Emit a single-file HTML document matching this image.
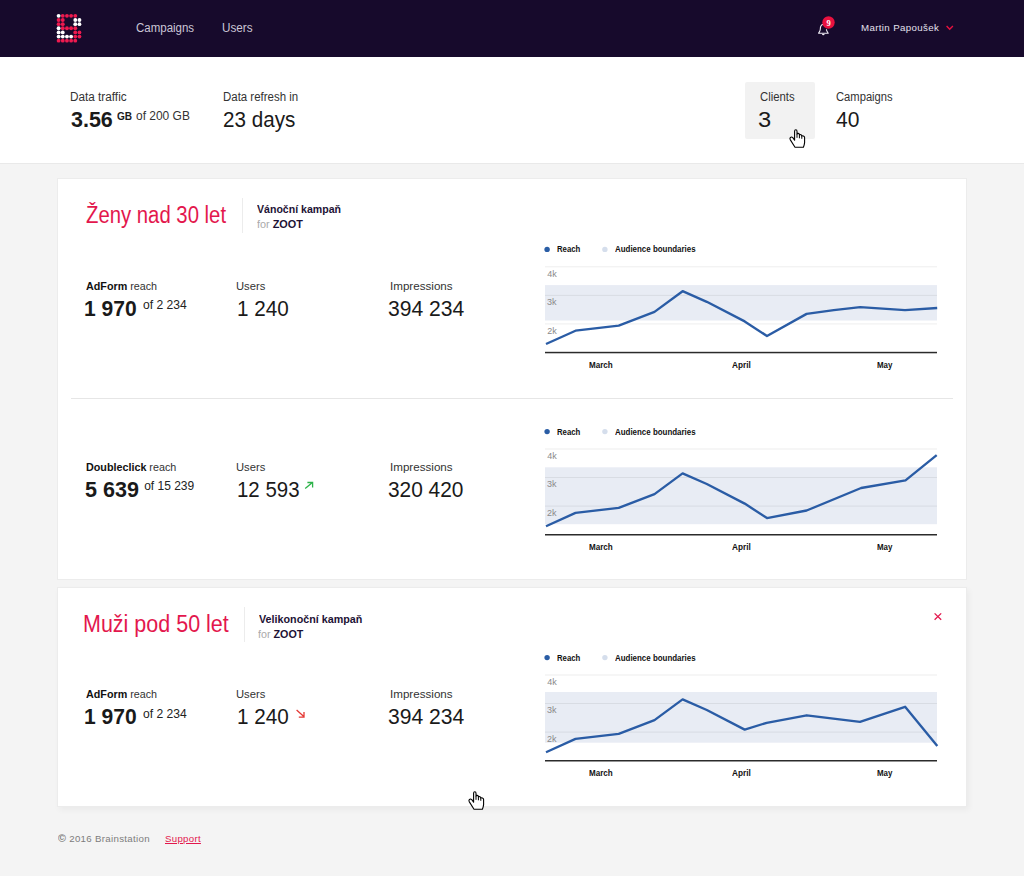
<!DOCTYPE html>
<html><head><meta charset="utf-8"><title>Brainstation</title>
<style>
html,body{margin:0;padding:0;}
body{width:1024px;height:876px;position:relative;overflow:hidden;background:#f4f4f4;font-family:"Liberation Sans",sans-serif;}
.t{position:absolute;white-space:nowrap;line-height:1;}
.b{display:inline-block;width:0;height:0;vertical-align:baseline;}
</style></head><body>
<div style="position:absolute;left:0;top:0;width:1024px;height:57px;background:#170a2c"></div>
<svg style="position:absolute;left:0;top:0" width="100" height="57"><circle cx="58.60" cy="15.85" r="1.92" fill="#ffffff"/><circle cx="62.77" cy="15.85" r="1.92" fill="#ee1a4f"/><circle cx="66.94" cy="15.85" r="1.92" fill="#ee1a4f"/><circle cx="71.11" cy="15.85" r="1.92" fill="#ee1a4f"/><circle cx="75.28" cy="15.85" r="1.92" fill="#ee1a4f"/><circle cx="58.60" cy="19.99" r="1.92" fill="#ee1a4f"/><circle cx="62.77" cy="19.99" r="1.92" fill="#ee1a4f"/><circle cx="75.28" cy="19.99" r="1.92" fill="#ffffff"/><circle cx="79.45" cy="19.99" r="1.92" fill="#ffffff"/><circle cx="58.60" cy="24.13" r="1.92" fill="#ee1a4f"/><circle cx="62.77" cy="24.13" r="1.92" fill="#ee1a4f"/><circle cx="75.28" cy="24.13" r="1.92" fill="#ffffff"/><circle cx="79.45" cy="24.13" r="1.92" fill="#ffffff"/><circle cx="58.60" cy="28.27" r="1.92" fill="#ffffff"/><circle cx="62.77" cy="28.27" r="1.92" fill="#ee1a4f"/><circle cx="66.94" cy="28.27" r="1.92" fill="#ee1a4f"/><circle cx="71.11" cy="28.27" r="1.92" fill="#ee1a4f"/><circle cx="75.28" cy="28.27" r="1.92" fill="#ee1a4f"/><circle cx="58.60" cy="32.41" r="1.92" fill="#ffffff"/><circle cx="62.77" cy="32.41" r="1.92" fill="#ffffff"/><circle cx="75.28" cy="32.41" r="1.92" fill="#ee1a4f"/><circle cx="79.45" cy="32.41" r="1.92" fill="#ee1a4f"/><circle cx="58.60" cy="36.55" r="1.92" fill="#ffffff"/><circle cx="62.77" cy="36.55" r="1.92" fill="#ffffff"/><circle cx="66.94" cy="36.55" r="1.92" fill="#ffffff"/><circle cx="71.11" cy="36.55" r="1.92" fill="#ffffff"/><circle cx="75.28" cy="36.55" r="1.92" fill="#ee1a4f"/><circle cx="79.45" cy="36.55" r="1.92" fill="#ee1a4f"/><circle cx="58.60" cy="40.69" r="1.92" fill="#ee1a4f"/><circle cx="62.77" cy="40.69" r="1.92" fill="#ee1a4f"/><circle cx="66.94" cy="40.69" r="1.92" fill="#ee1a4f"/><circle cx="71.11" cy="40.69" r="1.92" fill="#ee1a4f"/><circle cx="75.28" cy="40.69" r="1.92" fill="#ee1a4f"/></svg>
<div id="nav_campaigns" class="t" style="left:135.91px;top:21.50px;font-size:12px;color:#cbc6d6;font-weight:normal;transform:scaleX(0.9571);transform-origin:0 0;">Campaigns<i class="b"></i></div>
<div id="nav_users" class="t" style="left:221.89px;top:21.50px;font-size:12px;color:#cbc6d6;font-weight:normal;transform:scaleX(0.9768);transform-origin:0 0;">Users<i class="b"></i></div>
<svg style="position:absolute;left:810px;top:10px" width="30" height="30" viewBox="810 10 30 30"><path d="M823.3 24.2 C820.6 24.6 820.3 27 820.3 29.2 C820.2 31 819.2 32.2 818.6 33.2 L828.2 33.2 C827.6 32.2 826.5 31 826.4 29.2" fill="none" stroke="#f1eef6" stroke-width="1.1" stroke-linejoin="round"/><path d="M822 34 a1.3 1.3 0 0 0 2.6 0 z" fill="#f1eef6"/><circle cx="828.5" cy="22.5" r="6.2" fill="#e8113f"/><text x="828.6" y="26.2" font-family="Liberation Serif" font-weight="bold" font-size="8.5" fill="#fff" text-anchor="middle">9</text></svg>
<div id="user_name" class="t" style="left:860.99px;top:22.91px;font-size:9.5px;color:#e4e0ec;font-weight:normal;transform:scaleX(1.0213);transform-origin:0 0;letter-spacing:0.35px;">Martin Papoušek<i class="b"></i></div>
<svg style="position:absolute;left:940px;top:20px" width="20" height="15" viewBox="940 20 20 15"><path d="M946.6 26.1 L949.7 29.3 L952.9 26.1" fill="none" stroke="#e8113f" stroke-width="1.4"/></svg>
<div style="position:absolute;left:0;top:57px;width:1024px;height:106px;background:#fff;border-bottom:1px solid #e9e9e9"></div>
<div id="dt_label" class="t" style="left:70.41px;top:90.81px;font-size:12px;color:#333333;font-weight:normal;transform:scaleX(0.9795);transform-origin:0 0;">Data traffic<i class="b"></i></div>
<div id="dt_val" class="t" style="left:71.37px;top:108.50px;font-size:22.5px;color:#1a1a1a;font-weight:bold;transform:scaleX(0.9546);transform-origin:0 0;">3.56<i class="b"></i></div>
<div id="dt_gb" class="t" style="left:116.90px;top:110.61px;font-size:11px;color:#1a1a1a;font-weight:bold;transform:scaleX(0.9166);transform-origin:0 0;">GB<i class="b"></i></div>
<div id="dt_of" class="t" style="left:136.32px;top:109.60px;font-size:12px;color:#333;font-weight:normal;transform:scaleX(0.9968);transform-origin:0 0;">of 200 GB<i class="b"></i></div>
<div id="dr_label" class="t" style="left:223.21px;top:90.81px;font-size:12px;color:#333333;font-weight:normal;transform:scaleX(0.9542);transform-origin:0 0;">Data refresh in<i class="b"></i></div>
<div id="dr_val" class="t" style="left:223.10px;top:109.00px;font-size:22.5px;color:#1a1a1a;font-weight:normal;transform:scaleX(0.9171);transform-origin:0 0;">23 days<i class="b"></i></div>
<div style="position:absolute;left:745px;top:82px;width:70px;height:57px;background:#f2f2f2;border-radius:2px"></div>
<div id="cl_label" class="t" style="left:760.31px;top:91.00px;font-size:12px;color:#333333;font-weight:normal;transform:scaleX(0.9444);transform-origin:0 0;">Clients<i class="b"></i></div>
<div id="cl_val" class="t" style="left:757.95px;top:108.81px;font-size:22.5px;color:#1a1a1a;font-weight:normal;transform:scaleX(1.0542);transform-origin:0 0;">3<i class="b"></i></div>
<div id="cp_label" class="t" style="left:835.83px;top:91.00px;font-size:12px;color:#333333;font-weight:normal;transform:scaleX(0.9334);transform-origin:0 0;">Campaigns<i class="b"></i></div>
<div id="cp_val" class="t" style="left:835.58px;top:108.81px;font-size:22.5px;color:#1a1a1a;font-weight:normal;transform:scaleX(0.9346);transform-origin:0 0;">40<i class="b"></i></div>
<div style="position:absolute;left:57px;top:178px;width:908px;height:400px;background:#fff;border:1px solid #ececec"></div>
<div style="position:absolute;left:57px;top:587px;width:908px;height:218px;background:#fff;border:1px solid #ececec;box-shadow:2px 3px 6px rgba(0,0,0,0.045)"></div>
<div style="position:absolute;left:71px;top:398px;width:882px;height:1px;background:#e6e6e6"></div>
<div id="c1_title" class="t" style="left:85.91px;top:204.11px;font-size:23px;color:#e3174d;font-weight:normal;transform:scaleX(0.8833);transform-origin:0 0;">Ženy nad 30 let<i class="b"></i></div>
<div style="position:absolute;left:242px;top:198px;width:1px;height:35px;background:#ececec"></div>
<div id="c1_suba" class="t" style="left:257.09px;top:203.61px;font-size:11px;color:#1d1235;font-weight:bold;transform:scaleX(0.9612);transform-origin:0 0;">Vánoční kampaň<i class="b"></i></div>
<div id="c1_subb" class="t" style="left:257.08px;top:218.81px;font-size:11px;color:#1d1235;font-weight:bold;transform:scaleX(0.9880);transform-origin:0 0;"><span style="color:#aaa;font-weight:normal">for</span> ZOOT<i class="b"></i></div>
<div id="c2_title" class="t" style="left:83.46px;top:612.61px;font-size:23px;color:#e3174d;font-weight:normal;transform:scaleX(0.9344);transform-origin:0 0;">Muži pod 50 let<i class="b"></i></div>
<div style="position:absolute;left:244px;top:607px;width:1px;height:35px;background:#ececec"></div>
<div id="c2_suba" class="t" style="left:259.09px;top:613.61px;font-size:11px;color:#1d1235;font-weight:bold;transform:scaleX(0.9774);transform-origin:0 0;">Velikonoční kampaň<i class="b"></i></div>
<div id="c2_subb" class="t" style="left:258.14px;top:629.11px;font-size:11px;color:#1d1235;font-weight:bold;transform:scaleX(0.9744);transform-origin:0 0;"><span style="color:#aaa;font-weight:normal">for</span> ZOOT<i class="b"></i></div>
<svg style="position:absolute;left:0;top:0" width="1024" height="876"><rect x="545" y="285.10" width="392" height="35.40" fill="#e8ecf4"/><rect x="545" y="266.30" width="392" height="1" fill="#000" fill-opacity="0.07"/><rect x="545" y="294.85" width="392" height="1" fill="#000" fill-opacity="0.07"/><rect x="545" y="323.40" width="392" height="1" fill="#000" fill-opacity="0.07"/><rect x="545" y="351.80" width="392" height="1.5" fill="#2b2b2b"/><path d="M546.0 344.0 L575.5 330.7 L618.7 325.7 L654.5 311.9 L682.6 291.2 L706.8 301.8 L744.7 321.4 L767.0 336.0 L806.6 313.9 L833.8 310.1 L860.2 307.1 L905.0 310.1 L937.2 308.0" fill="none" stroke="#2a5ca5" stroke-width="2.35" stroke-linejoin="round"/><circle cx="547.1" cy="249.40" r="2.7" fill="#2a5da5"/><circle cx="604.9" cy="249.40" r="2.7" fill="#d5deec"/></svg>
<div id="ch1_lg1" class="t" style="left:556.63px;top:245.41px;font-size:9px;color:#111;font-weight:bold;transform:scaleX(0.8611);transform-origin:0 0;">Reach<i class="b"></i></div>
<div id="ch1_lg2" class="t" style="left:615.38px;top:245.41px;font-size:9px;color:#111;font-weight:bold;transform:scaleX(0.8812);transform-origin:0 0;">Audience boundaries<i class="b"></i></div>
<div id="ch1_y4k" class="t" style="left:547.30px;top:269.81px;font-size:9px;color:#8a8a8a;font-weight:normal;">4k<i class="b"></i></div>
<div id="ch1_y3k" class="t" style="left:546.97px;top:297.91px;font-size:9px;color:#8a8a8a;font-weight:normal;">3k<i class="b"></i></div>
<div id="ch1_y2k" class="t" style="left:547.30px;top:326.71px;font-size:9px;color:#8a8a8a;font-weight:normal;">2k<i class="b"></i></div>
<div id="ch1_mar" class="t" style="left:588.60px;top:360.91px;font-size:9px;color:#111;font-weight:bold;transform:scaleX(0.8948);transform-origin:0 0;">March<i class="b"></i></div>
<div id="ch1_apr" class="t" style="left:732.00px;top:360.91px;font-size:9px;color:#111;font-weight:bold;transform:scaleX(0.9131);transform-origin:0 0;">April<i class="b"></i></div>
<div id="ch1_may" class="t" style="left:877.00px;top:360.91px;font-size:9px;color:#111;font-weight:bold;transform:scaleX(0.8821);transform-origin:0 0;">May<i class="b"></i></div>
<svg style="position:absolute;left:0;top:0" width="1024" height="876"><rect x="545" y="467.30" width="392" height="56.90" fill="#e8ecf4"/><rect x="545" y="448.50" width="392" height="1" fill="#000" fill-opacity="0.07"/><rect x="545" y="477.05" width="392" height="1" fill="#000" fill-opacity="0.07"/><rect x="545" y="505.60" width="392" height="1" fill="#000" fill-opacity="0.07"/><rect x="545" y="534.00" width="392" height="1.5" fill="#2b2b2b"/><path d="M546.0 526.2 L575.5 512.9 L618.7 507.9 L654.5 494.1 L682.6 473.4 L706.8 484.0 L744.7 503.6 L767.0 518.1 L806.6 510.5 L861.1 488.0 L905.5 480.3 L936.7 455.2" fill="none" stroke="#2a5ca5" stroke-width="2.35" stroke-linejoin="round"/><circle cx="547.1" cy="431.60" r="2.7" fill="#2a5da5"/><circle cx="604.9" cy="431.60" r="2.7" fill="#d5deec"/></svg>
<div id="ch2_lg1" class="t" style="left:556.63px;top:427.60px;font-size:9px;color:#111;font-weight:bold;transform:scaleX(0.8611);transform-origin:0 0;">Reach<i class="b"></i></div>
<div id="ch2_lg2" class="t" style="left:615.38px;top:427.60px;font-size:9px;color:#111;font-weight:bold;transform:scaleX(0.8812);transform-origin:0 0;">Audience boundaries<i class="b"></i></div>
<div id="ch2_y4k" class="t" style="left:547.30px;top:452.00px;font-size:9px;color:#8a8a8a;font-weight:normal;">4k<i class="b"></i></div>
<div id="ch2_y3k" class="t" style="left:546.97px;top:480.10px;font-size:9px;color:#8a8a8a;font-weight:normal;">3k<i class="b"></i></div>
<div id="ch2_y2k" class="t" style="left:546.97px;top:508.90px;font-size:9px;color:#8a8a8a;font-weight:normal;">2k<i class="b"></i></div>
<div id="ch2_mar" class="t" style="left:588.60px;top:543.10px;font-size:9px;color:#111;font-weight:bold;transform:scaleX(0.8948);transform-origin:0 0;">March<i class="b"></i></div>
<div id="ch2_apr" class="t" style="left:732.00px;top:543.10px;font-size:9px;color:#111;font-weight:bold;transform:scaleX(0.9131);transform-origin:0 0;">April<i class="b"></i></div>
<div id="ch2_may" class="t" style="left:877.00px;top:543.10px;font-size:9px;color:#111;font-weight:bold;transform:scaleX(0.8821);transform-origin:0 0;">May<i class="b"></i></div>
<svg style="position:absolute;left:0;top:0" width="1024" height="876"><rect x="545" y="692.00" width="392" height="50.70" fill="#e8ecf4"/><rect x="545" y="674.50" width="392" height="1" fill="#000" fill-opacity="0.07"/><rect x="545" y="703.05" width="392" height="1" fill="#000" fill-opacity="0.07"/><rect x="545" y="731.60" width="392" height="1" fill="#000" fill-opacity="0.07"/><rect x="545" y="760.00" width="392" height="1.5" fill="#2b2b2b"/><path d="M546.0 752.2 L575.5 738.9 L618.7 733.9 L654.5 720.1 L682.6 699.4 L706.8 710.0 L744.7 729.6 L766.7 722.8 L806.7 715.3 L860.0 721.9 L905.1 706.8 L937.3 745.9" fill="none" stroke="#2a5ca5" stroke-width="2.35" stroke-linejoin="round"/><circle cx="547.1" cy="657.60" r="2.7" fill="#2a5da5"/><circle cx="604.9" cy="657.60" r="2.7" fill="#d5deec"/></svg>
<div id="ch3_lg1" class="t" style="left:556.63px;top:653.60px;font-size:9px;color:#111;font-weight:bold;transform:scaleX(0.8611);transform-origin:0 0;">Reach<i class="b"></i></div>
<div id="ch3_lg2" class="t" style="left:615.38px;top:653.60px;font-size:9px;color:#111;font-weight:bold;transform:scaleX(0.8812);transform-origin:0 0;">Audience boundaries<i class="b"></i></div>
<div id="ch3_y4k" class="t" style="left:547.30px;top:678.00px;font-size:9px;color:#8a8a8a;font-weight:normal;">4k<i class="b"></i></div>
<div id="ch3_y3k" class="t" style="left:546.97px;top:706.10px;font-size:9px;color:#8a8a8a;font-weight:normal;">3k<i class="b"></i></div>
<div id="ch3_y2k" class="t" style="left:546.97px;top:734.90px;font-size:9px;color:#8a8a8a;font-weight:normal;">2k<i class="b"></i></div>
<div id="ch3_mar" class="t" style="left:588.60px;top:769.10px;font-size:9px;color:#111;font-weight:bold;transform:scaleX(0.8948);transform-origin:0 0;">March<i class="b"></i></div>
<div id="ch3_apr" class="t" style="left:732.00px;top:769.10px;font-size:9px;color:#111;font-weight:bold;transform:scaleX(0.9131);transform-origin:0 0;">April<i class="b"></i></div>
<div id="ch3_may" class="t" style="left:877.00px;top:769.10px;font-size:9px;color:#111;font-weight:bold;transform:scaleX(0.8821);transform-origin:0 0;">May<i class="b"></i></div>
<div id="m1_rl" class="t" style="left:85.69px;top:280.81px;font-size:11.5px;color:#333333;font-weight:normal;transform:scaleX(0.9342);transform-origin:0 0;"><b style="color:#111">AdForm</b> reach<i class="b"></i></div>
<div id="m1_rv" class="t" style="left:84.31px;top:298.10px;font-size:22.5px;color:#1a1a1a;font-weight:bold;transform:scaleX(0.9352);transform-origin:0 0;">1 970<i class="b"></i></div>
<div id="m1_ro" class="t" style="left:142.89px;top:299.21px;font-size:12px;color:#222;font-weight:normal;transform:scaleX(1.0101);transform-origin:0 0;">of 2 234<i class="b"></i></div>
<div id="m1_ul" class="t" style="left:236.15px;top:280.81px;font-size:11.5px;color:#333333;font-weight:normal;transform:scaleX(0.9757);transform-origin:0 0;">Users<i class="b"></i></div>
<div id="m1_uv" class="t" style="left:237.11px;top:298.10px;font-size:22.5px;color:#1a1a1a;font-weight:normal;transform:scaleX(0.9193);transform-origin:0 0;">1 240<i class="b"></i></div>
<div id="m1_il" class="t" style="left:390.30px;top:280.81px;font-size:11.5px;color:#333333;font-weight:normal;transform:scaleX(1.0101);transform-origin:0 0;">Impressions<i class="b"></i></div>
<div id="m1_iv" class="t" style="left:388.13px;top:298.10px;font-size:22.5px;color:#1a1a1a;font-weight:normal;transform:scaleX(0.9389);transform-origin:0 0;">394 234<i class="b"></i></div>
<div id="m2_rl" class="t" style="left:85.77px;top:461.50px;font-size:11.5px;color:#333333;font-weight:normal;transform:scaleX(0.9353);transform-origin:0 0;"><b style="color:#111">Doubleclick</b> reach<i class="b"></i></div>
<div id="m2_rv" class="t" style="left:85.07px;top:478.81px;font-size:22.5px;color:#1a1a1a;font-weight:bold;transform:scaleX(0.9583);transform-origin:0 0;">5 639<i class="b"></i></div>
<div id="m2_ro" class="t" style="left:144.15px;top:479.50px;font-size:12px;color:#222;font-weight:normal;">of 15 239<i class="b"></i></div>
<div id="m2_ul" class="t" style="left:236.15px;top:461.50px;font-size:11.5px;color:#333333;font-weight:normal;transform:scaleX(0.9757);transform-origin:0 0;">Users<i class="b"></i></div>
<div id="m2_uv" class="t" style="left:237.09px;top:478.81px;font-size:22.5px;color:#1a1a1a;font-weight:normal;transform:scaleX(0.9089);transform-origin:0 0;">12 593<i class="b"></i></div>
<div id="m2_il" class="t" style="left:390.30px;top:461.50px;font-size:11.5px;color:#333333;font-weight:normal;transform:scaleX(1.0101);transform-origin:0 0;">Impressions<i class="b"></i></div>
<div id="m2_iv" class="t" style="left:388.29px;top:478.81px;font-size:22.5px;color:#1a1a1a;font-weight:normal;transform:scaleX(0.9276);transform-origin:0 0;">320 420<i class="b"></i></div>
<div id="m3_rl" class="t" style="left:85.69px;top:689.11px;font-size:11.5px;color:#333333;font-weight:normal;transform:scaleX(0.9342);transform-origin:0 0;"><b style="color:#111">AdForm</b> reach<i class="b"></i></div>
<div id="m3_rv" class="t" style="left:84.31px;top:706.41px;font-size:22.5px;color:#1a1a1a;font-weight:bold;transform:scaleX(0.9352);transform-origin:0 0;">1 970<i class="b"></i></div>
<div id="m3_ro" class="t" style="left:142.89px;top:707.50px;font-size:12px;color:#222;font-weight:normal;transform:scaleX(1.0101);transform-origin:0 0;">of 2 234<i class="b"></i></div>
<div id="m3_ul" class="t" style="left:236.15px;top:689.11px;font-size:11.5px;color:#333333;font-weight:normal;transform:scaleX(0.9757);transform-origin:0 0;">Users<i class="b"></i></div>
<div id="m3_uv" class="t" style="left:237.11px;top:706.41px;font-size:22.5px;color:#1a1a1a;font-weight:normal;transform:scaleX(0.9193);transform-origin:0 0;">1 240<i class="b"></i></div>
<div id="m3_il" class="t" style="left:390.30px;top:689.11px;font-size:11.5px;color:#333333;font-weight:normal;transform:scaleX(1.0101);transform-origin:0 0;">Impressions<i class="b"></i></div>
<div id="m3_iv" class="t" style="left:388.13px;top:706.41px;font-size:22.5px;color:#1a1a1a;font-weight:normal;transform:scaleX(0.9389);transform-origin:0 0;">394 234<i class="b"></i></div>
<svg style="position:absolute;left:300px;top:478px" width="16" height="14" viewBox="300 478 16 14"><path d="M305.2 488.6 L312.4 482.6 M307.4 482.5 L312.6 482.5 L312.6 487.6" stroke="#2db34a" stroke-width="1.3" fill="none"/></svg>
<svg style="position:absolute;left:292px;top:706px" width="16" height="14" viewBox="292 706 16 14"><path d="M296.6 710 L303.8 716.4 M298.8 717.1 L304 717.1 L304 711.9" stroke="#e53935" stroke-width="1.3" fill="none"/></svg>
<svg style="position:absolute;left:925px;top:605px" width="25" height="25" viewBox="925 605 25 25"><path d="M934.6 613.4 L941.2 619.8 M941.2 613.4 L934.6 619.8" stroke="#e3174d" stroke-width="1.3" fill="none"/></svg>
<svg style="position:absolute;left:785px;top:125px" width="25" height="25" viewBox="0 0 25 25"><path d="M9.6 15.2 L9.6 6.2 Q9.6 4.7 10.8 4.7 Q12 4.7 12 6.2 L12 9.1 Q12.2 8.3 13.2 8.4 Q14.4 8.5 14.4 9.7 Q14.8 9.4 15.6 9.6 Q16.8 9.8 16.8 11 Q17.5 10.6 18.4 10.9 Q19.6 11.3 19.6 12.6 L19.6 17.6 Q19.4 19.6 18.4 22.2 L10 22.2 L5.2 14.6 Q4.6 13.5 5.3 12.6 Q6.4 11.4 7.8 12.6 Z" fill="#fff" stroke="#000" stroke-width="1.1" stroke-linejoin="round"/><path d="M12 9.1 L12 12.8 M14.4 9.7 L14.4 13.3 M16.8 11 L16.8 13.8" stroke="#000" stroke-width="1" fill="none"/></svg>
<svg style="position:absolute;left:463.7px;top:787.2px" width="25" height="25" viewBox="0 0 25 25"><path d="M9.6 15.2 L9.6 6.2 Q9.6 4.7 10.8 4.7 Q12 4.7 12 6.2 L12 9.1 Q12.2 8.3 13.2 8.4 Q14.4 8.5 14.4 9.7 Q14.8 9.4 15.6 9.6 Q16.8 9.8 16.8 11 Q17.5 10.6 18.4 10.9 Q19.6 11.3 19.6 12.6 L19.6 17.6 Q19.4 19.6 18.4 22.2 L10 22.2 L5.2 14.6 Q4.6 13.5 5.3 12.6 Q6.4 11.4 7.8 12.6 Z" fill="#fff" stroke="#000" stroke-width="1.1" stroke-linejoin="round"/><path d="M12 9.1 L12 12.8 M14.4 9.7 L14.4 13.3 M16.8 11 L16.8 13.8" stroke="#000" stroke-width="1" fill="none"/></svg>
<div id="ft_copy" class="t" style="left:58.13px;top:832.90px;font-size:9.5px;color:#7c7c7c;font-weight:normal;transform:scaleX(1.0203);transform-origin:0 0;letter-spacing:0.3px;"><b style="font-size:10.5px">©</b> 2016 Brainstation<i class="b"></i></div>
<div id="ft_sup" class="t" style="left:164.79px;top:833.90px;font-size:9.5px;color:#e3174d;font-weight:normal;transform:scaleX(1.0155);transform-origin:0 0;letter-spacing:0.3px;"><u>Support</u><i class="b"></i></div>
</body></html>
